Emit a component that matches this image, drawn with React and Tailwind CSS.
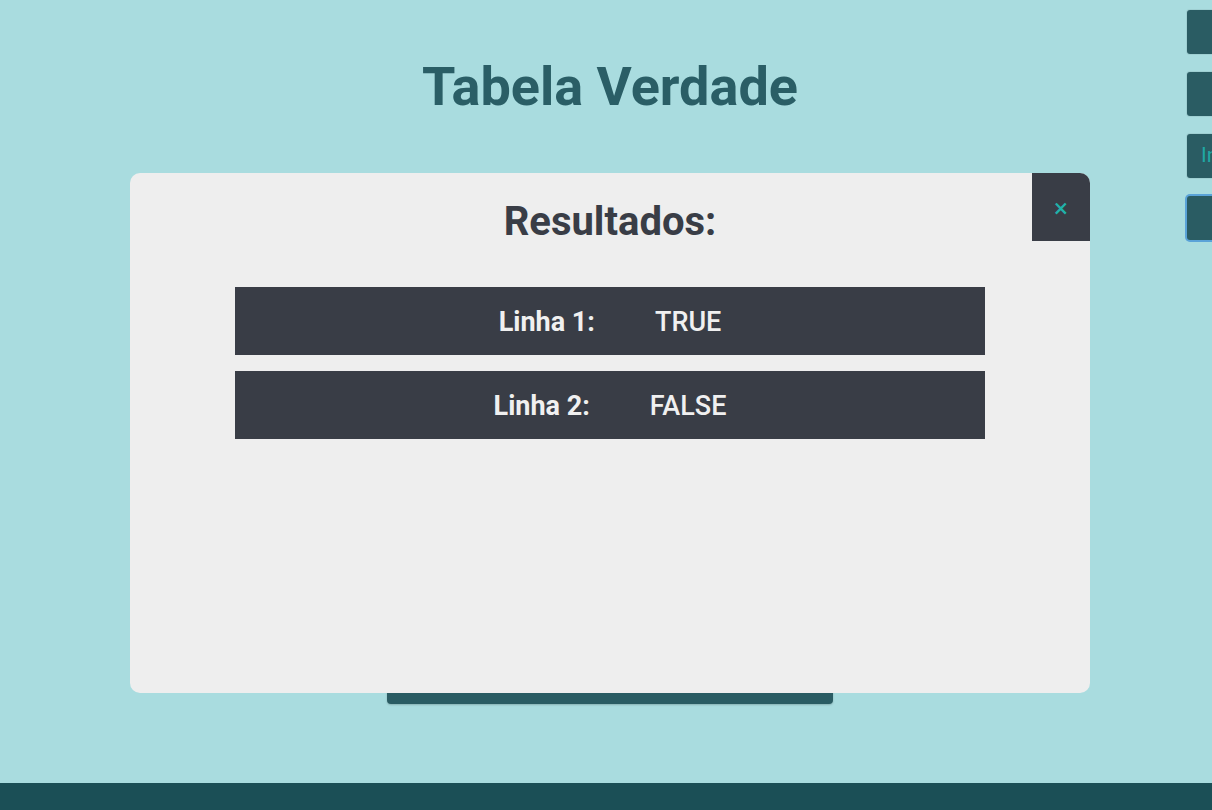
export default function App() {
  return (
    <div className="relative w-[1212px] h-[810px] overflow-hidden bg-[#a9dcdf]" style={{ fontFamily: 'Roboto, "Liberation Sans", sans-serif' }}>
      <div className="w-[1220px] flex flex-col items-center">
        <h1 className="mt-[54px] text-[54px] leading-[66px] font-bold text-[#2a5e66]">Tabela Verdade</h1>
        <div className="mt-[520px] w-[446px] h-[64px] rounded-[4px] bg-[#2a5c63] shadow-[0_1px_2px_rgba(0,0,0,0.2)]"></div>
      </div>
      <div className="absolute left-[1187px] top-[10px] flex flex-col gap-[18px]">
        <div className="w-[60px] h-[44px] rounded-[3px] bg-[#2a5c63] ring-1 ring-[#9fcfd2]"></div>
        <div className="w-[60px] h-[44px] rounded-[3px] bg-[#2a5c63] ring-1 ring-[#9fcfd2]"></div>
        <div className="w-[60px] h-[44px] rounded-[3px] bg-[#2a5c63] ring-1 ring-[#9fcfd2] flex items-center pl-[14px] text-[21px] text-[#1fa7a4] overflow-hidden">In</div>
        <div className="w-[60px] h-[44px] rounded-[3px] bg-[#2a5c63] ring-2 ring-[#5aa3d8]"></div>
      </div>
      <div className="absolute left-0 right-0 bottom-0 h-[27px] bg-[#1b4f56]"></div>
      <div className="absolute left-[130px] top-[173px] w-[960px] h-[520px] rounded-[10px] bg-[#eeeeee] flex flex-col items-center">
        <button className="absolute right-0 top-0 w-[58px] h-[68px] rounded-tr-[10px] bg-[#393d46] text-[#20b2aa] text-[26px] leading-none flex items-center justify-center pt-[2px]">×</button>
        <h2 className="mt-[23px] text-[40px] leading-[52px] font-bold text-[#393d46]">Resultados:</h2>
        <div className="mt-[39px] w-[750px] flex flex-col gap-[16px]">
          <div className="h-[68px] pt-[2px] bg-[#393d46] flex items-center justify-center gap-[60px] text-[27px] text-[#f0f0f0]">
            <span className="font-bold">Linha 1:</span>
            <span className="font-medium">TRUE</span>
          </div>
          <div className="h-[68px] pt-[2px] bg-[#393d46] flex items-center justify-center gap-[60px] text-[27px] text-[#f0f0f0]">
            <span className="font-bold">Linha 2:</span>
            <span className="font-medium">FALSE</span>
          </div>
        </div>
      </div>
    </div>
  );
}
